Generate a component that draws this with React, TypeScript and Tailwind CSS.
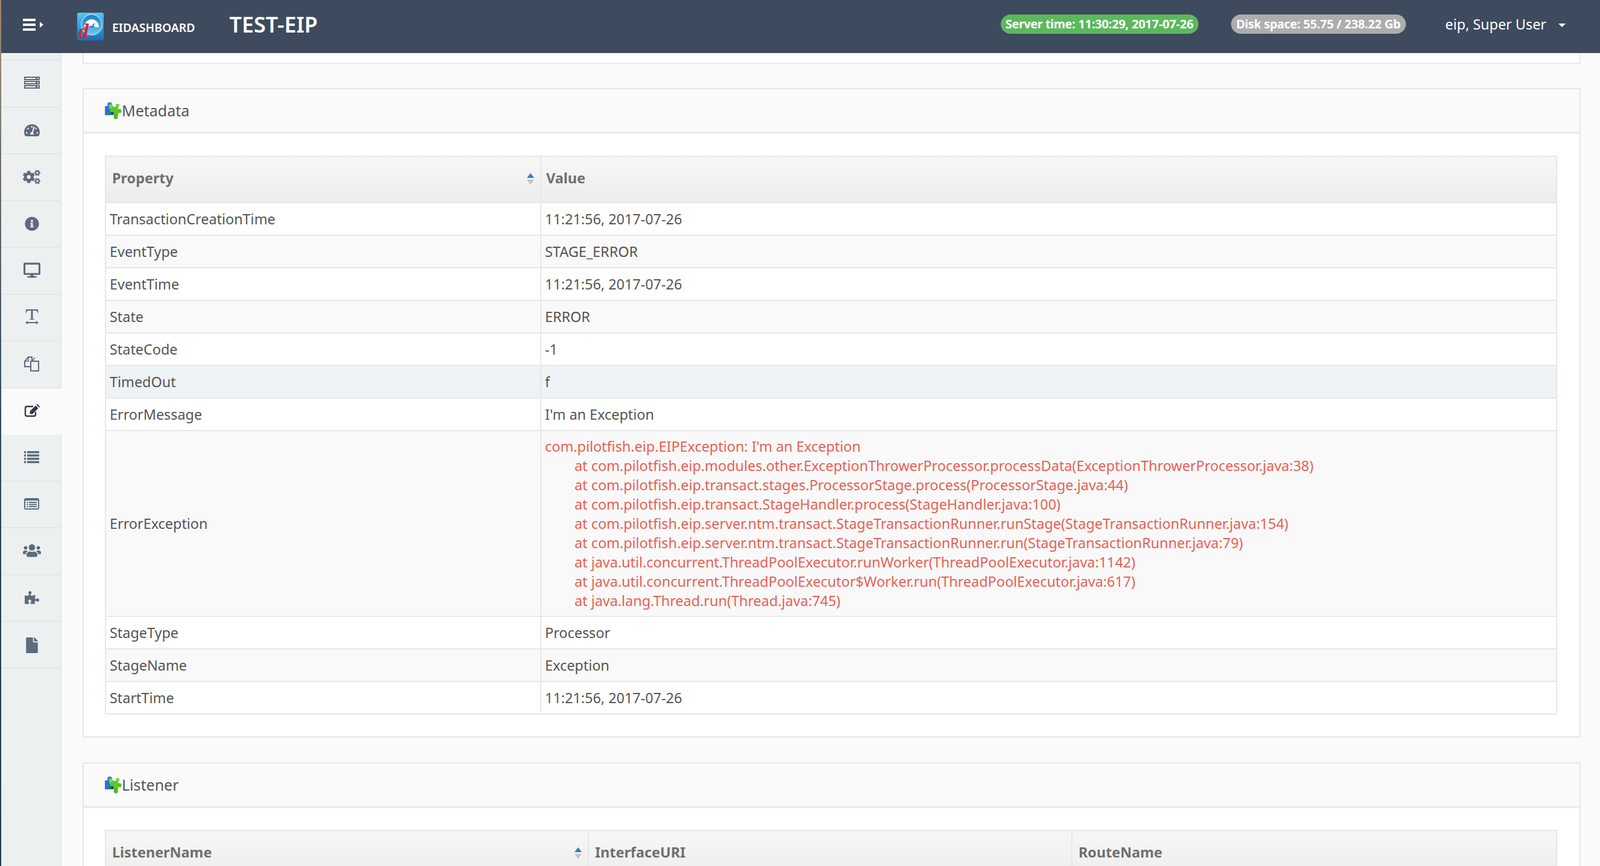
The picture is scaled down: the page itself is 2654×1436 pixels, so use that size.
import type { ReactNode } from "react"
import { FaTachometerAlt, FaCogs, FaInfoCircle, FaDesktop, FaUsers, FaPuzzlePiece, FaFile } from "react-icons/fa"

function ServerIcon() {
  return (
    <svg width="26" height="20" viewBox="0 0 26 20" fill="currentColor">
      {[0, 7, 14].map((y) => (
        <g key={y}>
          <rect x="0" y={y} width="26" height="6" />
          <rect x="2" y={y + 2} width="17" height="2" fill="#ecf0f1" />
          <rect x="22" y={y + 2} width="2" height="2" fill="#ecf0f1" />
        </g>
      ))}
    </svg>
  )
}

function TextWidthIcon() {
  return (
    <svg width="22" height="25" viewBox="0 0 22 25" fill="currentColor">
      <path d="M1 0 H21 L21.5 6 H20.5 C20 3 19 2 16 2 H12.5 V14 C12.5 15.5 13 16 15 16 V17 H7 V16 C9 16 9.5 15.5 9.5 14 V2 H6 C3 2 2 3 1.500 6 H0.5 Z" />
      <path d="M0 22 L4 19 V21 H18 V19 L22 22 L18 25 V23 H4 V25 Z" />
    </svg>
  )
}

function FilesIcon() {
  return (
    <svg width="25" height="25" viewBox="0 0 25 25" fill="none" stroke="currentColor" strokeWidth="2">
      <path d="M10 17 H1 V8 L7 1 H13 V8" />
      <path d="M7 1 V8 H1" strokeWidth="1.500" />
      <path d="M11 24 V8 H18 L24 8 V24 Z" />
      <path d="M18 2 L13 8" strokeWidth="1.500" />
    </svg>
  )
}

function EditIcon() {
  return (
    <svg width="26" height="22" viewBox="0 0 26 22">
      <path d="M19 13 V17 C19 19 18 20 16 20 H5 C3 20 2 19 2 17 V7 C2 5 3 4 5 4 H15" fill="none" stroke="currentColor" strokeWidth="2.400" />
      <path d="M9 12 L19 2 L24 7 L14 17 H9 Z" fill="currentColor" stroke="#fafafa" strokeWidth="1" />
      <path d="M20 1 L22 0 L26 4 L25 6 Z" fill="currentColor" />
    </svg>
  )
}

function ListIcon() {
  return (
    <svg width="25" height="20" viewBox="0 0 25 20" fill="currentColor">
      {[0, 5.500, 11, 16.500].map((y) => (
        <g key={y}>
          <rect x="0" y={y} width="3" height="3.500" />
          <rect x="5" y={y} width="20" height="3.500" />
        </g>
      ))}
    </svg>
  )
}

function ListAltIcon() {
  return (
    <svg width="25" height="19" viewBox="0 0 25 19" fill="currentColor">
      <rect x="1" y="1" width="23" height="17" rx="2" fill="none" stroke="currentColor" strokeWidth="2" />
      <rect x="1" y="1" width="23" height="3" />
      {[6, 9.500, 13].map((y) => (
        <g key={y}>
          <rect x="4" y={y} width="2.500" height="2" />
          <rect x="8" y={y} width="13" height="2" />
        </g>
      ))}
    </svg>
  )
}

const navIcons: { node: ReactNode; active?: boolean; lift?: boolean }[] = [
  { node: <ServerIcon />, lift: true },
  { node: <FaTachometerAlt className="text-[26px]" /> },
  { node: <FaCogs className="text-[29px]" /> },
  { node: <FaInfoCircle className="text-[24px]" /> },
  { node: <FaDesktop className="text-[28px]" /> },
  { node: <TextWidthIcon /> },
  { node: <FilesIcon /> },
  { node: <EditIcon />, active: true },
  { node: <ListIcon /> },
  { node: <ListAltIcon /> },
  { node: <FaUsers className="text-[30px]" /> },
  { node: <FaPuzzlePiece className="text-[24px]" /> },
  { node: <FaFile className="text-[26px] mt-[3px]" /> },
]

const rows = [
  ["TransactionCreationTime", "11:21:56, 2017-07-26"],
  ["EventType", "STAGE_ERROR"],
  ["EventTime", "11:21:56, 2017-07-26"],
  ["State", "ERROR"],
  ["StateCode", "-1"],
  ["TimedOut", "f"],
  ["ErrorMessage", "I'm an Exception"],
]

const stack = [
  "at com.pilotfish.eip.modules.other.ExceptionThrowerProcessor.processData(ExceptionThrowerProcessor.java:38)",
  "at com.pilotfish.eip.transact.stages.ProcessorStage.process(ProcessorStage.java:44)",
  "at com.pilotfish.eip.transact.StageHandler.process(StageHandler.java:100)",
  "at com.pilotfish.eip.server.ntm.transact.StageTransactionRunner.runStage(StageTransactionRunner.java:154)",
  "at com.pilotfish.eip.server.ntm.transact.StageTransactionRunner.run(StageTransactionRunner.java:79)",
  "at java.util.concurrent.ThreadPoolExecutor.runWorker(ThreadPoolExecutor.java:1142)",
  "at java.util.concurrent.ThreadPoolExecutor$Worker.run(ThreadPoolExecutor.java:617)",
  "at java.lang.Thread.run(Thread.java:745)",
]

const tailRows = [
  ["StageType", "Processor"],
  ["StageName", "Exception"],
  ["StartTime", "11:21:56, 2017-07-26"],
]

function Logo() {
  return (
    <svg width="44" height="46" viewBox="0 0 44 46" className="shrink-0 overflow-visible">
      <defs>
        <linearGradient id="logoBg" x1="0" y1="0" x2="0" y2="1">
          <stop offset="0" stopColor="#5cc4f2" />
          <stop offset="0.5" stopColor="#2f9fe0" />
          <stop offset="1" stopColor="#2068b4" />
        </linearGradient>
        <linearGradient id="logoDial" x1="0" y1="0" x2="0" y2="1">
          <stop offset="0" stopColor="#1d7cc4" />
          <stop offset="1" stopColor="#6cc8f2" />
        </linearGradient>
      </defs>
      <rect x="0" y="0" width="44" height="46" rx="3" fill="url(#logoBg)" />
      <circle cx="24" cy="20" r="17" fill="url(#logoDial)" stroke="#a9dcf5" strokeWidth="1.500" />
      <path d="M12 24 A12 13 0 0 1 36 24 H31 L27 22 H17 Z" fill="#fff" />
      <path d="M22 24 L30 16 L26 25 Z" fill="#1d7cc4" />
      <text x="2" y="42" fontFamily="'Liberation Serif', serif" fontStyle="italic" fontWeight="700" fontSize="34" fill="#e0202e">
        d
      </text>
    </svg>
  )
}

function PuzzleIcon() {
  return (
    <svg width="28" height="29" viewBox="0 0 28 29" className="shrink-0">
      <circle cx="8" cy="4.500" r="4" fill="#3f86dd" />
      <rect x="0" y="7" width="14" height="15" rx="1" fill="#2f74cf" />
      <rect x="8" y="16" width="7" height="5" fill="#123f8f" />
      <path d="M7 6 L13 10 L9 14 L7 10 Z" fill="#7ed63c" />
      <rect x="9" y="8" width="13" height="14" fill="#5cc82c" />
      <circle cx="10" cy="7" r="3" fill="#7ed63c" />
      <circle cx="21" cy="6" r="3" fill="#6fd436" />
      <circle cx="24" cy="15" r="3.500" fill="#56c029" />
      <circle cx="18" cy="25" r="3.500" fill="#4eb826" />
      <rect x="15" y="20" width="6" height="5" fill="#4eb826" />
      <circle cx="12" cy="19" r="2.500" fill="#123f8f" />
    </svg>
  )
}

function SortArrows() {
  return (
    <span className="flex flex-col items-center gap-[3px] mt-[3px]">
      <span className="w-0 h-0 border-x-[6px] border-x-transparent border-b-[8px] border-b-[#2f7fd1]" />
      <span className="w-0 h-0 border-x-[6px] border-x-transparent border-t-[8px] border-t-[#c4c4c4]" />
    </span>
  )
}

function Panel({ title, className, children }: { title: string; className?: string; children: ReactNode }) {
  return (
    <section className={`bg-white border-2 border-[#e7e7e7] rounded-[2px] ${className ?? ""}`}>
      <div className="h-[74px] bg-[#fafafa] border-b-4 border-[#ececec] flex items-center pl-[35px] text-[25px] text-[#555]">
        <PuzzleIcon />
        <span>{title}</span>
      </div>
      {children}
    </section>
  )
}

function Th({ children, sort, className }: { children: ReactNode; sort?: boolean; className?: string }) {
  return (
    <th className={`h-[77px] px-[10px] border-x-2 border-t-2 border-[#e7e7e7] bg-gradient-to-b from-[#f7f7f7] to-[#ededed] text-left font-bold text-[#6f6f6f] ${className ?? ""}`}>
      <div className="flex items-center justify-between pb-[6px]">
        <span>{children}</span>
        {sort && <SortArrows />}
      </div>
    </th>
  )
}

function Row({ k, v, i }: { k: string; v: string; i: number }) {
  const bg = k === "TimedOut" ? "bg-[#eef3f6]" : i % 2 === 0 ? "bg-white" : "bg-[#f9f9f9]"
  return (
    <tr className={bg}>
      <td className="h-[54px] border-2 border-[#e7e7e7] px-[6px]">{k}</td>
      <td className="h-[54px] border-2 border-[#e7e7e7] px-[6px]">{v}</td>
    </tr>
  )
}

export default function App() {
  return (
    <div className="w-[2654px] h-[1436px] overflow-hidden flex bg-[#fafafa] text-[#555] font-['Open_Sans',sans-serif] text-[23.4px] leading-[32px]">
      <div className="w-[2px] shrink-0 bg-gradient-to-b from-[#a08a70] via-[#2a4a63] to-[#1f3a52]" />
      <div className="flex-1 min-w-0 flex flex-col">
        <header className="h-[88px] shrink-0 bg-[#3e4a5d] text-white flex items-center">
          <div className="flex items-center ml-[36px] w-[90px] gap-[7px] -mt-[6px]">
            <div className="flex flex-col gap-[4px] w-[21px]">
              <span className="h-[4px] bg-white" />
              <span className="h-[4px] bg-white" />
              <span className="h-[4px] bg-white" />
            </div>
            <span className="w-0 h-0 border-y-[5px] border-y-transparent border-l-[6px] border-l-white" />
          </div>
          <Logo />
          <span className="ml-[14px] text-[19.4px] font-semibold mt-[4px]">EIDASHBOARD</span>
          <span className="ml-[57px] text-[36px] font-semibold -mt-[6px]">TEST-EIP</span>
          <span className="ml-auto h-[32px] rounded-[16px] bg-[#5cb85c] px-[8px] text-[19.6px] font-semibold leading-[32px] -mt-[8px] [text-shadow:0_0_1px_#fff]">
            Server time: 11:30:29, 2017-07-26
          </span>
          <span className="ml-[54px] h-[32px] rounded-[16px] bg-[#adadad] px-[9px] text-[19.6px] font-semibold leading-[32px] -mt-[8px] [text-shadow:0_0_1px_#fff]">
            Disk space: 55.75 / 238.22 Gb
          </span>
          <span className="ml-[65px] -mt-[8px]">eip, Super User</span>
          <span className="ml-[20px] mr-[57px] w-0 h-0 border-x-[6px] border-x-transparent border-t-[6px] border-t-white -mt-[4px]" />
        </header>

        <div className="flex-1 min-h-0 flex">
          <nav className="w-[98px] shrink-0 box-content border-r-2 border-[#e7e7e7] bg-[#ecf0f1] flex flex-col">
            <div className="h-[13px] border-b-2 border-[#e3e7e8]" />
            {navIcons.map(({ node, active, lift }, i) => (
              <div
                key={i}
                className={`h-[77.5px] shrink-0 flex items-center justify-center border-b-2 pl-[3px] ${lift ? "pb-[4px]" : "pb-[1px]"} ${
                  active
                    ? "bg-[#fafafa] border-[#fafafa] text-[#2f3a4a] w-[100px] pr-[2px]"
                    : "border-[#e3e7e8] text-[#5e6b7c]"
                }`}
              >
                {node}
              </div>
            ))}
          </nav>

          <main className="flex-1 min-w-0 pl-[35px] pr-[32px]">
            <div className="h-[18px] bg-white border-x-2 border-b-2 border-[#e7e7e7] rounded-b-[2px]" />

            <Panel title="Metadata" className="mt-[40px] h-[1077px]">
              <div className="pt-[36px] pl-[35px] pr-[37px]">
                <table className="w-full table-fixed border-collapse">
                  <colgroup>
                    <col className="w-[722px]" />
                    <col />
                  </colgroup>
                  <thead>
                    <tr>
                      <Th sort>Property</Th>
                      <Th className="pl-[8px]">Value</Th>
                    </tr>
                  </thead>
                  <tbody>
                    {rows.map(([k, v], i) => (
                      <Row key={k} k={k} v={v} i={i} />
                    ))}
                    <tr className="bg-[#f9f9f9]">
                      <td className="border-2 border-[#e7e7e7] px-[6px]">ErrorException</td>
                      <td className="border-2 border-[#e7e7e7] px-[6px] py-[9px] text-[#ea5f53]">
                        <div>com.pilotfish.eip.EIPException: I'm an Exception</div>
                        {stack.map((line) => (
                          <div key={line} className="pl-[49px]">
                            {line}
                          </div>
                        ))}
                      </td>
                    </tr>
                    {tailRows.map(([k, v], i) => (
                      <Row key={k} k={k} v={v} i={i + 8} />
                    ))}
                  </tbody>
                </table>
              </div>
            </Panel>

            <Panel title="Listener" className="mt-[41px] h-[400px]">
              <div className="pt-[36px] pl-[35px] pr-[37px]">
                <table className="w-full table-fixed border-collapse">
                  <colgroup>
                    <col className="w-[801px]" />
                    <col className="w-[802px]" />
                    <col />
                  </colgroup>
                  <thead>
                    <tr>
                      <Th sort>ListenerName</Th>
                      <Th>InterfaceURI</Th>
                      <Th>RouteName</Th>
                    </tr>
                  </thead>
                </table>
              </div>
            </Panel>
          </main>
        </div>
      </div>
    </div>
  )
}
